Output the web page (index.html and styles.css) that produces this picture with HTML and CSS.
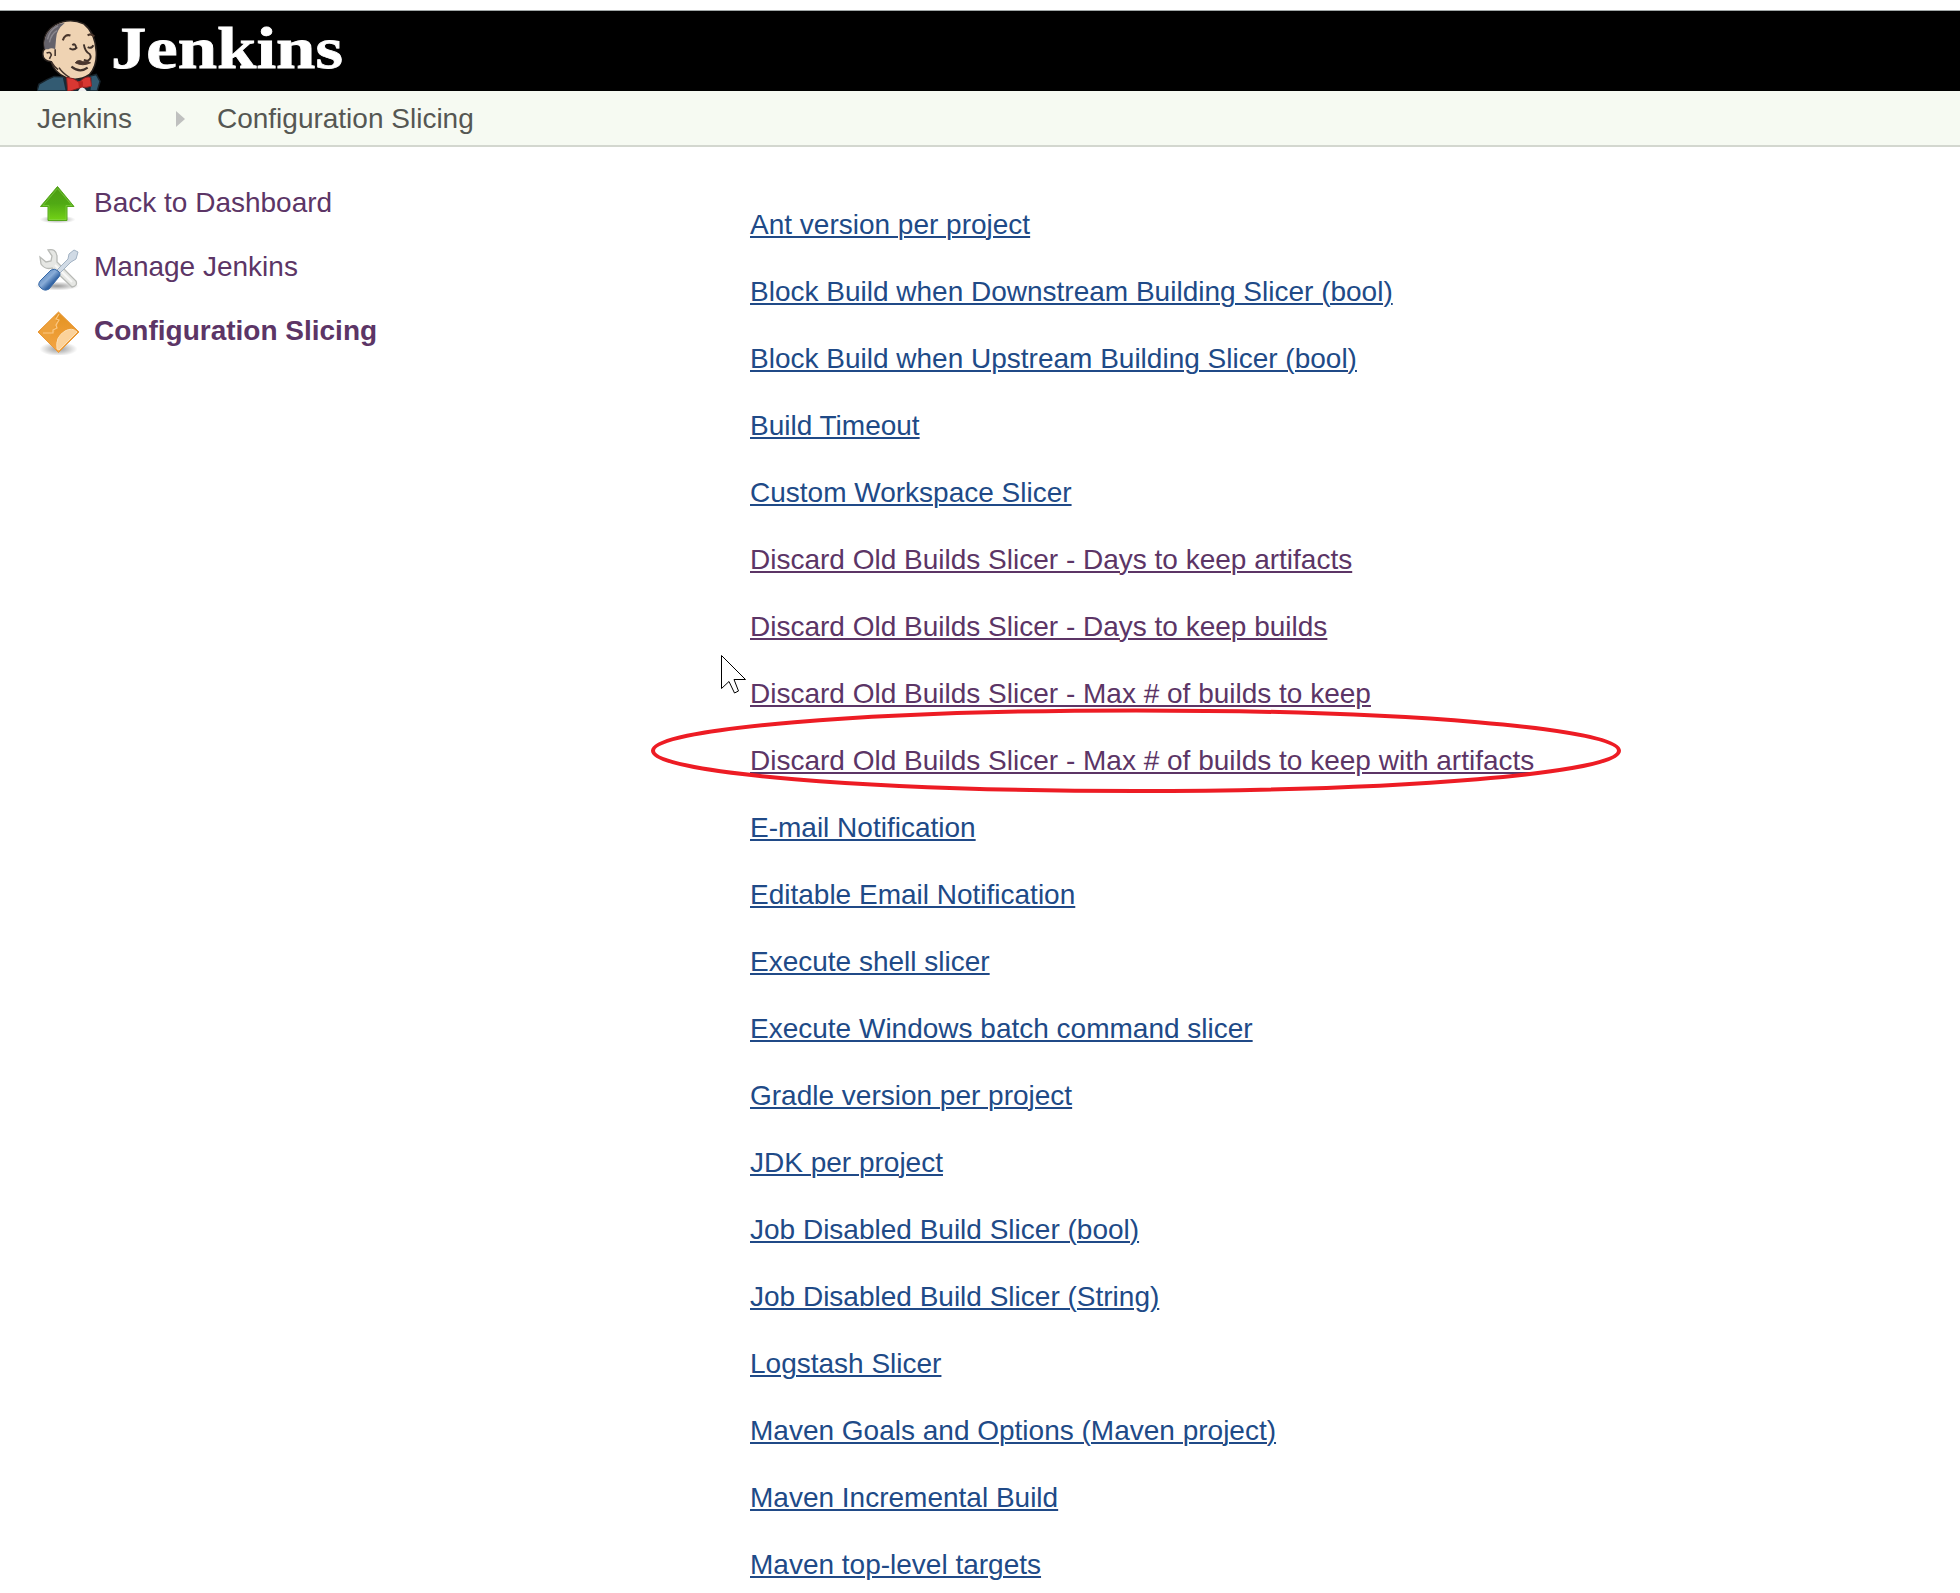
FILE: index.html
```html
<!DOCTYPE html>
<html lang="en">
<head>
<meta charset="utf-8">
<title>Configuration Slicing [Jenkins]</title>
<link rel="stylesheet" href="styles.css">
</head>
<body>
<header class="header">
  <a class="brand">
    <svg class="butler" width="65" height="72" viewBox="0 0 68 74" preserveAspectRatio="none">
      <path d="M0 74 L2 67 Q10 62 18 59 L50 60 L62 57 L66 64 L63 74Z" fill="#335b72" stroke="#18242c" stroke-width="1.5"/>
      <path d="M27 60 L30 74 H56 L57 60Z" fill="#172a36"/>
      <path d="M8 31 Q4 15 19 6 Q34 -2 49 5 Q61 14 62 34 Q63 48 55 57 Q43 65 30 60 Q17 54 15 44 Q6 43 6 36 Q6 32 8 31Z" fill="#efd3b3" stroke="#28211e" stroke-width="1.6"/>
      <path d="M8 31 Q5 13 23 5 L29 4 Q20 11 20 20 L19 31 Q15 29 12 31Z" fill="#65626a"/>
      <path d="M11 21 Q13 11 22 7 M13 24 Q15 15 21 12" fill="none" stroke="#8a878e" stroke-width="1.5"/>
      <path d="M19 31 V38 M10 35 Q14 33 15 37 L13 41 M15 44 Q18 49 22 52 M23 50 Q27 56 34 60" fill="none" stroke="#40312a" stroke-width="1.6"/>
      <path d="M27 22 Q29 15 35 17 M53 17 Q56 14 60 18" fill="none" stroke="#4b372c" stroke-width="2.2"/>
      <path d="M34 30 Q38 33 42 29 M37 27 Q40 24 41 30 M53 29 Q57 31 59 27" fill="none" stroke="#40312a" stroke-width="2"/>
      <path d="M49 26 Q50 33 55 36 Q58 40 53 43 L49 42" fill="none" stroke="#40312a" stroke-width="2"/>
      <path d="M40 45 Q43 41 48 44 Q54 43 56 45 Q48 49 40 45Z" fill="#49352d" stroke="#49352d"/>
      <path d="M36 49 Q45 56 53 50" fill="none" stroke="#40312a" stroke-width="2.3"/>
      <path d="M31 60 Q38 60 44 65 Q51 58 56 60 L57 69 Q51 71 47 70 L35 74 H32Z" fill="#d93732" stroke="#8d201f"/>
      <path d="M43 64 L48 64 L48 71 L44 71Z" fill="#b7221f"/>
      <path d="M43 74 Q47 67 52 74Z" fill="#eee"/>
    </svg>
    <svg class="wordmark" width="234" height="80" viewBox="0 0 234 80"><text x="1" y="57" textLength="232" lengthAdjust="spacingAndGlyphs">Jenkins</text></svg>
  </a>
</header>
<nav class="breadcrumbs">
  <a>Jenkins</a>
  <svg class="separator" width="9" height="16" viewBox="0 0 9 16"><path d="M0 0 L9 8 L0 16Z" fill="#bfc0bf"/></svg>
  <a>Configuration Slicing</a>
</nav>
<div class="page">
  <aside class="tasks">
    <a class="task">
      <svg width="48" height="48" viewBox="0 0 48 48">
        <defs>
          <linearGradient id="green" x1="0" y1="0" x2="0" y2="1"><stop offset="0" stop-color="#4d9b12"/><stop offset=".5" stop-color="#50a914"/><stop offset="1" stop-color="#73d216"/></linearGradient>
          <radialGradient id="shade"><stop offset="0" stop-color="#000" stop-opacity=".4"/><stop offset="1" stop-color="#000" stop-opacity="0"/></radialGradient>
        </defs>
        <ellipse cx="24.500" cy="40.500" rx="18" ry="4" fill="url(#shade)"/>
        <path d="M24.500 7.500 L41 27.500 H34 V41.500 H15 V27.500 H7.500Z" fill="url(#green)" stroke="#55a51b"/>
        <path d="M24.500 9.500 L39 26.500 H33 V40.500 H16 V26.500 H10Z" fill="none" stroke="#8bd950" stroke-opacity=".55"/>
      </svg>
      <span>Back to Dashboard</span>
    </a>
    <a class="task">
      <svg width="48" height="48" viewBox="0 -1 48 48">
        <defs><linearGradient id="handle" x1="0" y1="0" x2="1" y2="1"><stop offset="0" stop-color="#4778b4"/><stop offset=".45" stop-color="#89acd7"/><stop offset=".65" stop-color="#3465a4"/><stop offset="1" stop-color="#3465a4"/></linearGradient></defs>
        <ellipse cx="24" cy="42" rx="22" ry="4.500" fill="url(#shade)"/>
        <path d="M15 6 Q23 4 24 12 L24 18 L43 37 Q45 42 39 43 L19 24 Q12 26 8 20 L7 13 L13 18 L18 17 L19 12Z" fill="#e6e7e4" stroke="#b8bab6" stroke-width="1.300"/>
        <path d="M22 21 L39 38" fill="none" stroke="#f8f8f7" stroke-width="2"/>
        <path d="M24 26 L35 15 L36 10 L41 6 L45 8 L43 15 L38 18 L27 29Z" fill="#d0dae5" stroke="#a2b2c3"/>
        <path d="M18 26 Q22 24 25 27 Q29 30 25 34 L16 45 Q11 48 7 43 Q4 40 8 36Z" fill="url(#handle)" stroke="#3768a6"/>
      </svg>
      <span>Manage Jenkins</span>
    </a>
    <a class="task task-current">
      <svg width="48" height="48" viewBox="0 0 48 48">
        <defs><linearGradient id="orange" x1="0" y1="0" x2="0" y2="1"><stop offset="0" stop-color="#e3921f"/><stop offset="1" stop-color="#f5a545"/></linearGradient></defs>
        <ellipse cx="25.500" cy="42" rx="19" ry="7" fill="url(#shade)"/>
        <path d="M25.500 5 L46 25 L25.500 45.500 L5 25Z" fill="url(#orange)" stroke="#e8983a"/>
        <path d="M22 9 L6 25 L19 38 L17 30 L19 25 L22 25 L21 20 L25 18 L23 13Z" fill="#eda13c"/>
        <path d="M26 7 L23 12 L26 13 L23 18 L24 21 L20 23 L20 26 L10 26" fill="none" stroke="#fbc884" stroke-width="1.200"/>
        <path d="M24 42 Q22 30 32 24 Q39 20 44 25 L26 43Z" fill="#fbd29b" stroke="#fde1b9"/>
      </svg>
      <span>Configuration Slicing</span>
    </a>
  </aside>
  <main class="slicers">
    <a>Ant version per project</a>
    <a>Block Build when Downstream Building Slicer (bool)</a>
    <a>Block Build when Upstream Building Slicer (bool)</a>
    <a>Build Timeout</a>
    <a>Custom Workspace Slicer</a>
    <a class="visited">Discard Old Builds Slicer - Days to keep artifacts</a>
    <a class="visited">Discard Old Builds Slicer - Days to keep builds</a>
    <a class="visited">Discard Old Builds Slicer - Max # of builds to keep</a>
    <a class="visited">Discard Old Builds Slicer - Max # of builds to keep with artifacts</a>
    <a>E-mail Notification</a>
    <a>Editable Email Notification</a>
    <a>Execute shell slicer</a>
    <a>Execute Windows batch command slicer</a>
    <a>Gradle version per project</a>
    <a>JDK per project</a>
    <a>Job Disabled Build Slicer (bool)</a>
    <a>Job Disabled Build Slicer (String)</a>
    <a>Logstash Slicer</a>
    <a>Maven Goals and Options (Maven project)</a>
    <a>Maven Incremental Build</a>
    <a>Maven top-level targets</a>
  </main>
</div>
<svg class="highlight" width="972" height="86" viewBox="0 0 972 86"><ellipse cx="486" cy="43.700" rx="483" ry="40.300" fill="none" stroke="#ed1c24" stroke-width="4"/></svg>
<svg class="pointer" width="28" height="42" viewBox="0 0 28 42"><path d="M1.500 1.500 V34.500 L9 27.500 L14.500 39 L18.500 37 L14 25.500 H25.500Z" fill="#fff" stroke="#000"/></svg>
</body>
</html>
```
FILE: styles.css
```css
body {
  margin: 0;
  padding-top: 10px;
  height: 1583px;
  overflow: hidden;
  box-sizing: border-box;
  background: #fff;
  color: #4d545d;
  font: 28px/32px "Liberation Sans", Arial, sans-serif;
}

html { overflow: hidden; }
svg { display: block; flex: none; }

.header {
  box-sizing: border-box;
  height: 81px;
  border-top: 1px solid #a0a6a6;
  background: #000;
}

.brand {
  display: flex;
  align-items: flex-end;
  height: 80px;
  padding-left: 37px;
}

.butler { margin-right: 8px; }

.wordmark text {
  fill: #fff;
  stroke: #fff;
  stroke-width: 0.8px;
  font: bold 60px "Liberation Serif", Georgia, serif;
}

.breadcrumbs {
  display: flex;
  align-items: center;
  box-sizing: border-box;
  height: 56px;
  padding-left: 37px;
  border-bottom: 2px solid #d3d7cf;
  background: #f6faf2;
  color: #555753;
}

.breadcrumbs a { padding-top: 2px; }

.separator { margin: 2px 32px 0 44px; }

.page { display: flex; }

.tasks {
  display: flex;
  flex-direction: column;
  gap: 16px;
  box-sizing: border-box;
  width: 750px;
  padding: 32px 0 0 33px;
}

.task {
  display: flex;
  align-items: center;
  gap: 13px;
  height: 48px;
  color: #5c3566;
}

.task-current { font-weight: bold; }

.slicers {
  display: flex;
  flex-direction: column;
  align-items: flex-start;
  padding-top: 44px;
}

.slicers a {
  line-height: 67px;
  color: #204a87;
  text-decoration: underline 2px;
  text-underline-offset: 2px;
}

.slicers .visited { color: #5c3566; }

.highlight {
  position: absolute;
  left: 650px;
  top: 707px;
}

.pointer {
  position: absolute;
  left: 720px;
  top: 654px;
}
```
